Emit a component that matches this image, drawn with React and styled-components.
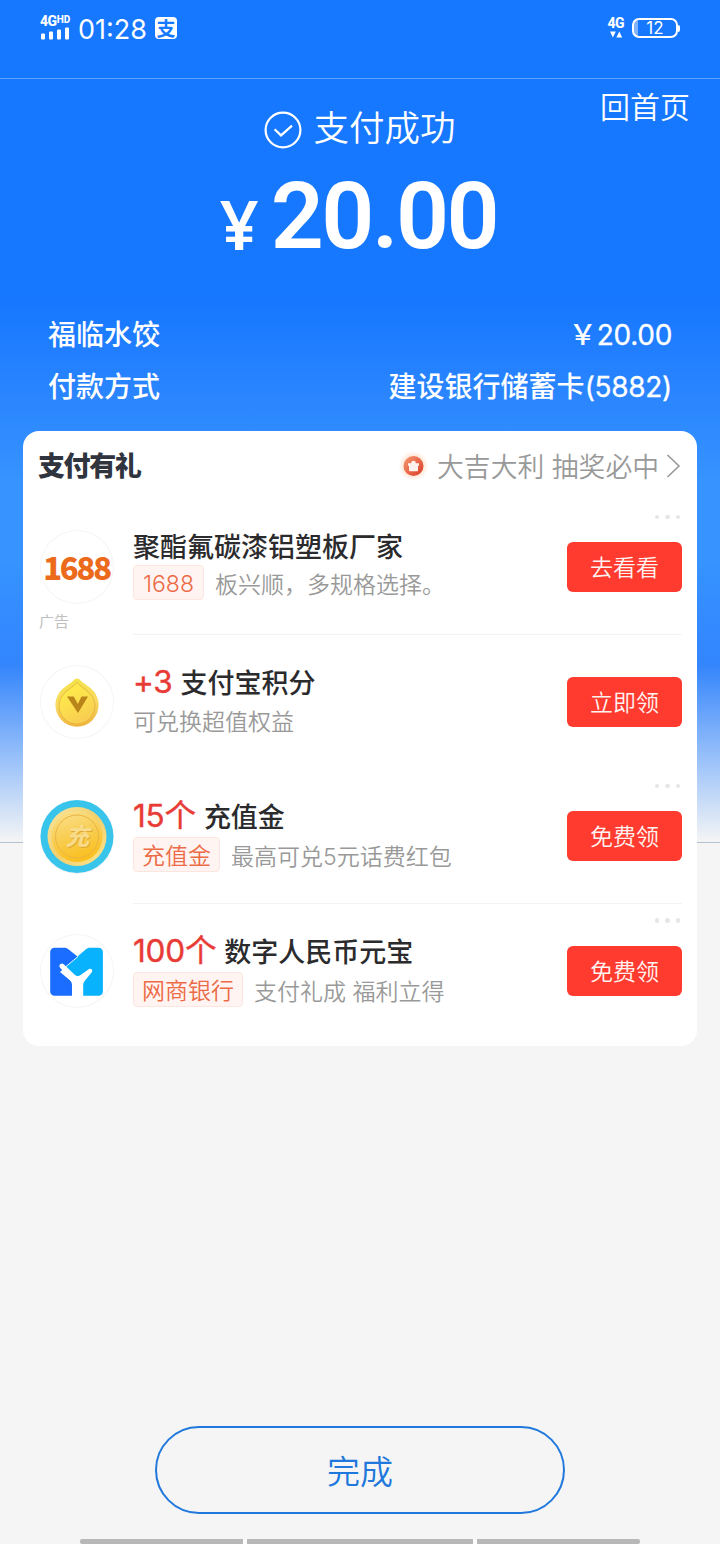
import React from "react";
import styled, { createGlobalStyle } from "styled-components";

const COLORS = {
  primary: "#1677ff",
  red: "#ff3b2f",
  highlight: "#e93b36",
  text: "#2b2b2d",
  muted: "#999999",
  page: "#f5f5f5",
};

const offers = [
  {
    id: "1688",
    icon: <Logo1688 />,
    title: "聚酯氟碳漆铝塑板厂家",
    tag: "1688",
    desc: "板兴顺，多规格选择。",
    action: "去看看",
    ad: true,
    more: true,
    divider: true,
  },
  {
    id: "points",
    icon: <PointsCoin />,
    highlight: "+3",
    title: "支付宝积分",
    desc: "可兑换超值权益",
    action: "立即领",
  },
  {
    id: "recharge",
    icon: <RechargeCoin />,
    highlight: "15个",
    title: "充值金",
    tag: "充值金",
    desc: "最高可兑5元话费红包",
    action: "免费领",
    more: true,
    divider: true,
  },
  {
    id: "mybank",
    icon: <BankLogo />,
    highlight: "100个",
    title: "数字人民币元宝",
    tag: "网商银行",
    desc: "支付礼成 福利立得",
    action: "免费领",
    more: true,
  },
];

const App = () => {
  return (
    <>
      <GlobalStyle />
      <Screen>
        <StatusBar>
          <StatusGroup>
            <Signal>
              <Network>
                4G<sup>HD</sup>
              </Network>
              <SignalBars />
            </Signal>
            <Clock>01:28</Clock>
            <AppBadge>支</AppBadge>
          </StatusGroup>
          <StatusGroup>
            <DataNetwork>
              <Network>4G</Network>
              <svg width="14" height="7" viewBox="0 0 14 7" fill="#fff">
                <path d="M1 .5h5.800L3.900 6.500zM7.400 6.500h5.800L10.300.5z" />
              </svg>
            </DataNetwork>
            <Battery>12</Battery>
          </StatusGroup>
        </StatusBar>

        <Result>
          <ResultHead>
            <ResultTitle>
              <svg width="38" height="38" viewBox="0 0 38 38" fill="none" stroke="#fff">
                <circle cx="19" cy="19" r="17.400" strokeWidth="2.200" />
                <path d="M10.600 18.200l6.400 6.200 11-9.800" strokeWidth="2.200" />
              </svg>
              <ResultText>支付成功</ResultText>
            </ResultTitle>
            <HomeLink>回首页</HomeLink>
          </ResultHead>
          <Amount>
            <Yen>¥</Yen>
            <Digits>20.00</Digits>
          </Amount>
        </Result>

        <Details>
          <DetailRow>
            <span>福临水饺</span>
            <span>
              ￥<Num>20.00</Num>
            </span>
          </DetailRow>
          <DetailRow>
            <span>付款方式</span>
            <span>
              建设银行储蓄卡<Num>(5882)</Num>
            </span>
          </DetailRow>
        </Details>

        <Card>
          <CardHead>
            <CardTitle>支付有礼</CardTitle>
            <Lottery>
              <GiftIcon />
              <LotteryText>大吉大利 抽奖必中</LotteryText>
              <svg width="15" height="26" viewBox="0 0 15 26" fill="none">
                <path d="M1.500 2l11.500 11L1.500 24" stroke="#999" strokeWidth="1.600" />
              </svg>
            </Lottery>
          </CardHead>
          {offers.map((offer) => (
            <Offer key={offer.id}>
              <IconBox>
                <Avatar>{offer.icon}</Avatar>
                {offer.ad && <AdLabel>广告</AdLabel>}
              </IconBox>
              <OfferBody $divider={offer.divider}>
                <OfferText>
                  <OfferTitle $tall={!!offer.highlight}>
                    {offer.highlight && <Highlight>{offer.highlight}</Highlight>}
                    {offer.title}
                  </OfferTitle>
                  <OfferDesc>
                    {offer.tag && <Tag>{offer.tag}</Tag>}
                    {offer.desc}
                  </OfferDesc>
                </OfferText>
                <ActionBtn>{offer.action}</ActionBtn>
                {offer.more && (
                  <More>
                    <i />
                    <i />
                    <i />
                  </More>
                )}
              </OfferBody>
            </Offer>
          ))}
        </Card>

        <Footer>
          <DoneBtn>完成</DoneBtn>
          <NavHints>
            <NavHint $width={163} />
            <NavHint $width={226} />
            <NavHint $width={163} />
          </NavHints>
        </Footer>
      </Screen>
    </>
  );
};

function SignalBars() {
  return (
    <svg width="30" height="13" viewBox="0 0 30 13" fill="#fff">
      <rect x="1" y="6.5" width="4" height="6" rx="1" />
      <rect x="9" y="4.5" width="4" height="8" rx="1" />
      <rect x="17" y="2.5" width="4" height="10" rx="1" />
      <rect x="25" y="0.5" width="4" height="12" rx="1" />
    </svg>
  );
}

function GiftIcon() {
  return (
    <svg width="32" height="32" viewBox="0 0 32 32">
      <defs>
        <radialGradient id="giftGlow">
          <stop offset="0.6" stopColor="#ffe3d2" />
          <stop offset="1" stopColor="#ffffff" />
        </radialGradient>
        <linearGradient id="giftBg" x1="0" y1="0" x2="1" y2="1">
          <stop offset="0" stopColor="#f79a70" />
          <stop offset="1" stopColor="#d83a26" />
        </linearGradient>
      </defs>
      <circle cx="15.5" cy="16" r="15" fill="url(#giftGlow)" />
      <circle cx="15.5" cy="16" r="10" fill="url(#giftBg)" />
      <path
        d="M10 13.200h3.200c0-1.600 1-2.400 2.300-2.400s2.300.8 2.300 2.400H21v2.600h-1v4.600q0 .8-.8.800h-7.400q-.8 0-.8-.8v-4.600h-1z"
        fill="#fff2ec"
      />
    </svg>
  );
}

function Logo1688() {
  return <BrandText>1688</BrandText>;
}

function PointsCoin() {
  return (
    <svg width="74" height="74" viewBox="0 0 74 74">
      <defs>
        <linearGradient id="dropBg" x1="0.5" y1="0" x2="0.6" y2="1">
          <stop offset="0" stopColor="#f4e24a" />
          <stop offset="0.5" stopColor="#f9da62" />
          <stop offset="1" stopColor="#efb33c" />
        </linearGradient>
        <linearGradient id="dropInner" x1="0.2" y1="0" x2="0.7" y2="1">
          <stop offset="0" stopColor="#fff04a" />
          <stop offset="1" stopColor="#f8cb52" />
        </linearGradient>
      </defs>
      <path
        d="M37 13.500c1.400 0 2.300.8 3.300 1.800 3.200 3.400 6.500 4.700 10.700 8.300A21.600 21.600 0 1 1 23 23.600c4.200-3.600 7.500-4.900 10.700-8.300 1-1 1.900-1.800 3.300-1.800z"
        fill="url(#dropBg)"
      />
      <path
        d="M37 17.500c3.500 3.800 7.500 6 11.300 9.500a18 18 0 1 1-22.600 0C29.500 23.500 33.500 21.300 37 17.500z"
        fill="url(#dropInner)"
        stroke="#e3b23c"
        strokeWidth="0.900"
      />
      <path d="M27 31.500h6.800l4 7.500 3.800-7.500h6.400L38 48z" fill="#b98418" />
    </svg>
  );
}

function RechargeCoin() {
  return (
    <svg width="74" height="74" viewBox="0 0 74 74">
      <defs>
        <linearGradient id="coinRim" x1="0" y1="0" x2="1" y2="1">
          <stop offset="0" stopColor="#f9e7a0" />
          <stop offset="0.5" stopColor="#f3cf6c" />
          <stop offset="1" stopColor="#fbe58d" />
        </linearGradient>
        <linearGradient id="coinFace" x1="0.2" y1="0" x2="0.5" y2="1">
          <stop offset="0" stopColor="#fbe08c" />
          <stop offset="0.5" stopColor="#f8cd52" />
          <stop offset="1" stopColor="#fbbf1c" />
        </linearGradient>
      </defs>
      <circle cx="37" cy="36.500" r="36.500" fill="#39c4ec" />
      <circle cx="37" cy="36.500" r="29.500" fill="url(#coinRim)" />
      <circle cx="37" cy="36.500" r="25.500" fill="url(#coinFace)" />
      <circle cx="37" cy="36.500" r="21.500" fill="none" stroke="#e9b544" strokeWidth="1" />
      <CoinText x="38" y="45.500" fill="#e0a733">
        充
      </CoinText>
      <CoinText x="37.300" y="44.800" fill="#f8dc8c">
        充
      </CoinText>
    </svg>
  );
}

function BankLogo() {
  return (
    <svg width="74" height="74" viewBox="0 0 74 74">
      <path
        d="M14.500 13.700h9.800c1.800 0 3 .6 4.400 1.700l9 7.400L20 38l12 10v13.700H14.500c-2.400 0-4.300-1.900-4.300-4.300V18c0-2.400 1.900-4.300 4.300-4.300z"
        fill="#1a6dff"
      />
      <path
        d="M58.600 13.700H50c-1.800 0-3 .6-4.300 1.700L25.500 32.500l12 12L43 50v11.700h15.600c2.400 0 4.300-1.900 4.300-4.300V18c0-2.400-1.900-4.300-4.300-4.300z"
        fill="#08b2fc"
      />
      <path d="M38.200 22.400L25 33.400" stroke="#fff" strokeWidth="0.900" />
      <path
        d="M23.700 30.200L35 41c1.500 1.400 3.600 1.500 5.200.3l8.500-6c1.200-.8 2.400-.6 3.100.2.700.900.600 1.900-.2 2.900L45 46.500c-1.200 1.500-1.800 3-1.800 5v10.700H32V51.500c0-2-.5-3.500-1.700-5L20 33.600c-.9-1.100-.8-2.400.2-3.300 1-.9 2.400-1 3.500-.1z"
        fill="#fff"
      />
    </svg>
  );
}

const GlobalStyle = createGlobalStyle`
  body {
    margin: 0;
    background: ${COLORS.page};
    font-family: "Inter", "Noto Sans CJK SC", sans-serif;
  }
  * {
    box-sizing: border-box;
  }
  svg {
    display: block;
    flex: none;
  }
`;

const Screen = styled.div`
  width: 720px;
  height: 1544px;
  overflow: hidden;
  display: flex;
  flex-direction: column;
  color: white;
  background: linear-gradient(#b3c1d3, #b3c1d3) 0 842px / 100% 1px no-repeat,
    linear-gradient(
        ${COLORS.primary} 300px,
        #2a85ff 395px,
        #3693ff 480px,
        #3693ff 560px,
        #3388ff 640px,
        #3485fc 665px,
        #a5c8f9 770px,
        ${COLORS.page} 842px
      )
      0 0 / 100% 842px no-repeat,
    ${COLORS.page};
`;
const StatusBar = styled.div`
  height: 79px;
  padding: 0 40px;
  display: flex;
  justify-content: space-between;
  align-items: flex-start;
  border-bottom: 1px solid #5ca2ff;
`;
const StatusGroup = styled.div`
  display: flex;
  align-items: center;
  height: 55px;
`;
const Signal = styled.div`
  display: flex;
  flex-direction: column;
  width: 30px;
  margin-right: 8px;
`;
const Network = styled.div`
  font-family: Roboto, sans-serif;
  font-size: 14px;
  line-height: 12px;
  font-weight: 800;
  white-space: nowrap;
  height: 12px;
  letter-spacing: -0.5px;
  sup {
    font-size: 10px;
    line-height: 0;
    vertical-align: 3px;
    letter-spacing: 0;
  }
`;
const Clock = styled.div`
  font-size: 27px;
  line-height: 30px;
  padding-top: 5px;
`;
const AppBadge = styled.div`
  width: 22px;
  height: 22px;
  margin-left: 8px;
  border-radius: 4px;
  background: white;
  color: ${COLORS.primary};
  font-family: "Noto Sans CJK SC", sans-serif;
  font-size: 19px;
  font-weight: 700;
  line-height: 21px;
  text-align: center;
`;
const DataNetwork = styled.div`
  display: flex;
  flex-direction: column;
  align-items: center;
  gap: 2px;
  margin-right: 8px;
`;
const Battery = styled.div`
  position: relative;
  width: 46px;
  height: 20px;
  margin-right: 2px;
  border: 2px solid white;
  border-radius: 7px;
  font-size: 17px;
  line-height: 17px;
  text-align: center;
  background: linear-gradient(90deg, #82b3f8 4px, transparent 4px);
  &::after {
    content: "";
    position: absolute;
    right: -4px;
    top: 5px;
    width: 2px;
    height: 7px;
    border-radius: 0 2px 2px 0;
    background: white;
  }
`;
const Result = styled.div`
  height: 230px;
`;
const ResultHead = styled.div`
  display: grid;
  grid-template-columns: 1fr auto 1fr;
  padding: 6px 30px 0;
`;
const ResultTitle = styled.div`
  grid-column: 2;
  display: flex;
  align-items: center;
  gap: 11px;
  height: 90px;
`;
const ResultText = styled.span`
  padding-bottom: 9px;
  font-size: 35.500px;
  font-weight: 350;
`;
const HomeLink = styled.div`
  justify-self: end;
  font-size: 30px;
  font-weight: 350;
  line-height: 45px;
`;
const Amount = styled.div`
  display: flex;
  justify-content: center;
  align-items: baseline;
  gap: 12px;
  height: 90px;
  margin-top: -6px;
  padding-right: 3px;
`;
const Yen = styled.span`
  font-family: "Noto Sans", sans-serif;
  font-size: 68px;
  line-height: 66px;
  font-weight: 600;
  transform: translateY(2px);
`;
const Digits = styled.span`
  font-family: Roboto, sans-serif;
  font-size: 93px;
  line-height: 96px;
  font-weight: 600;
  letter-spacing: -2.500px;
`;
const Details = styled.div`
  height: 122px;
  padding: 0 48px;
`;
const DetailRow = styled.div`
  display: flex;
  justify-content: space-between;
  font-size: 28px;
  font-weight: 500;
  line-height: 52px;
`;
const Num = styled.span`
  font-weight: 400;
  letter-spacing: -0.3px;
  -webkit-text-stroke: 0.3px currentColor;
`;
const Card = styled.div`
  width: 674px;
  height: 615px;
  margin-left: 23px;
  border-radius: 16px;
  background: white;
`;
const CardHead = styled.div`
  display: flex;
  justify-content: space-between;
  align-items: center;
  height: 69px;
  padding: 0 16px 0 15px;
`;
const CardTitle = styled.div`
  padding-bottom: 2px;
  color: #30343f;
  font-family: "Noto Sans CJK SC", sans-serif;
  font-size: 27px;
  font-weight: 900;
  letter-spacing: -1.400px;
`;
const Lottery = styled.div`
  display: flex;
  align-items: center;
  color: ${COLORS.muted};
`;
const LotteryText = styled.span`
  margin: 0 7px;
  font-size: 26.800px;
  font-weight: 350;
`;
const Offer = styled.div`
  display: flex;
  height: 134.670px;
  padding: 0 15px 0 16px;
`;
const IconBox = styled.div`
  position: relative;
  display: flex;
  align-items: center;
  width: 94px;
`;
const Avatar = styled.div`
  display: flex;
  align-items: center;
  justify-content: center;
  width: 74px;
  height: 74px;
  margin-left: 0.5px;
  border-radius: 50%;
  box-shadow: inset 0 0 0 1px #f5f5f5;
`;
const BrandText = styled.span`
  padding-bottom: 1px;
  font-family: "Noto Sans CJK SC", sans-serif;
  font-size: 31px;
  font-weight: 900;
  letter-spacing: -2.200px;
  color: #ec6a1c;
`;
const CoinText = styled.text`
  font-family: "Noto Sans CJK SC", sans-serif;
  font-size: 24px;
  font-weight: 700;
  font-style: italic;
  text-anchor: middle;
`;
const AdLabel = styled.div`
  position: absolute;
  left: 0;
  top: 112px;
  color: #c0c0c0;
  font-size: 15px;
  line-height: 20px;
`;
const OfferBody = styled.div`
  position: relative;
  flex: 1;
  display: flex;
  align-items: center;
  justify-content: space-between;
  border-bottom: ${(p) => (p.$divider ? "1px solid #f3f3f3" : "none")};
`;
const OfferText = styled.div`
  padding-bottom: 5px;
  white-space: nowrap;
`;
const OfferTitle = styled.div`
  display: flex;
  align-items: baseline;
  height: ${(p) => (p.$tall ? "42px" : "37px")};
  line-height: ${(p) => (p.$tall ? "41px" : "39px")};
  color: ${COLORS.text};
  font-size: 27px;
  font-weight: 500;
`;
const Highlight = styled.span`
  margin-right: 8px;
  color: ${COLORS.highlight};
  font-size: 31.500px;
  font-weight: 400;
  letter-spacing: -0.2px;
  -webkit-text-stroke: 0.4px currentColor;
`;
const OfferDesc = styled.div`
  display: flex;
  align-items: center;
  height: 35px;
  color: ${COLORS.muted};
  font-size: 23px;
  font-weight: 350;
`;
const Tag = styled.span`
  min-width: 71px;
  height: 35px;
  margin-right: 11px;
  padding: 0 8px;
  border: 1px solid #fde6e0;
  border-radius: 4px;
  background: #fff4f1;
  color: #ec6a45;
  line-height: 37px;
  text-align: center;
`;
const ActionBtn = styled.div`
  width: 115px;
  height: 50px;
  border-radius: 6px;
  background: ${COLORS.red};
  color: #fff3f1;
  font-size: 23px;
  font-weight: 350;
  line-height: 52px;
  text-align: center;
  cursor: pointer;
`;
const More = styled.div`
  position: absolute;
  top: 14.500px;
  right: 2px;
  display: flex;
  gap: 6px;
  i {
    width: 4.500px;
    height: 4.500px;
    border-radius: 50%;
    background: #e6e6e6;
  }
`;
const Footer = styled.div`
  flex: 1;
  display: flex;
  flex-direction: column;
  align-items: center;
  justify-content: flex-end;
`;
const DoneBtn = styled.div`
  width: 410px;
  height: 88px;
  margin-bottom: 25px;
  border: 2px solid #2078dc;
  border-radius: 44px;
  color: #2078dc;
  font-size: 33px;
  font-weight: 350;
  line-height: 88px;
  text-align: center;
  cursor: pointer;
`;
const NavHints = styled.div`
  display: flex;
  gap: 4px;
  background: #fdfdfd;
  border-radius: 2px;
  overflow: hidden;
`;
const NavHint = styled.div`
  width: ${(p) => p.$width}px;
  height: 5px;
  background: #b8b8b8;
`;

export default App;
